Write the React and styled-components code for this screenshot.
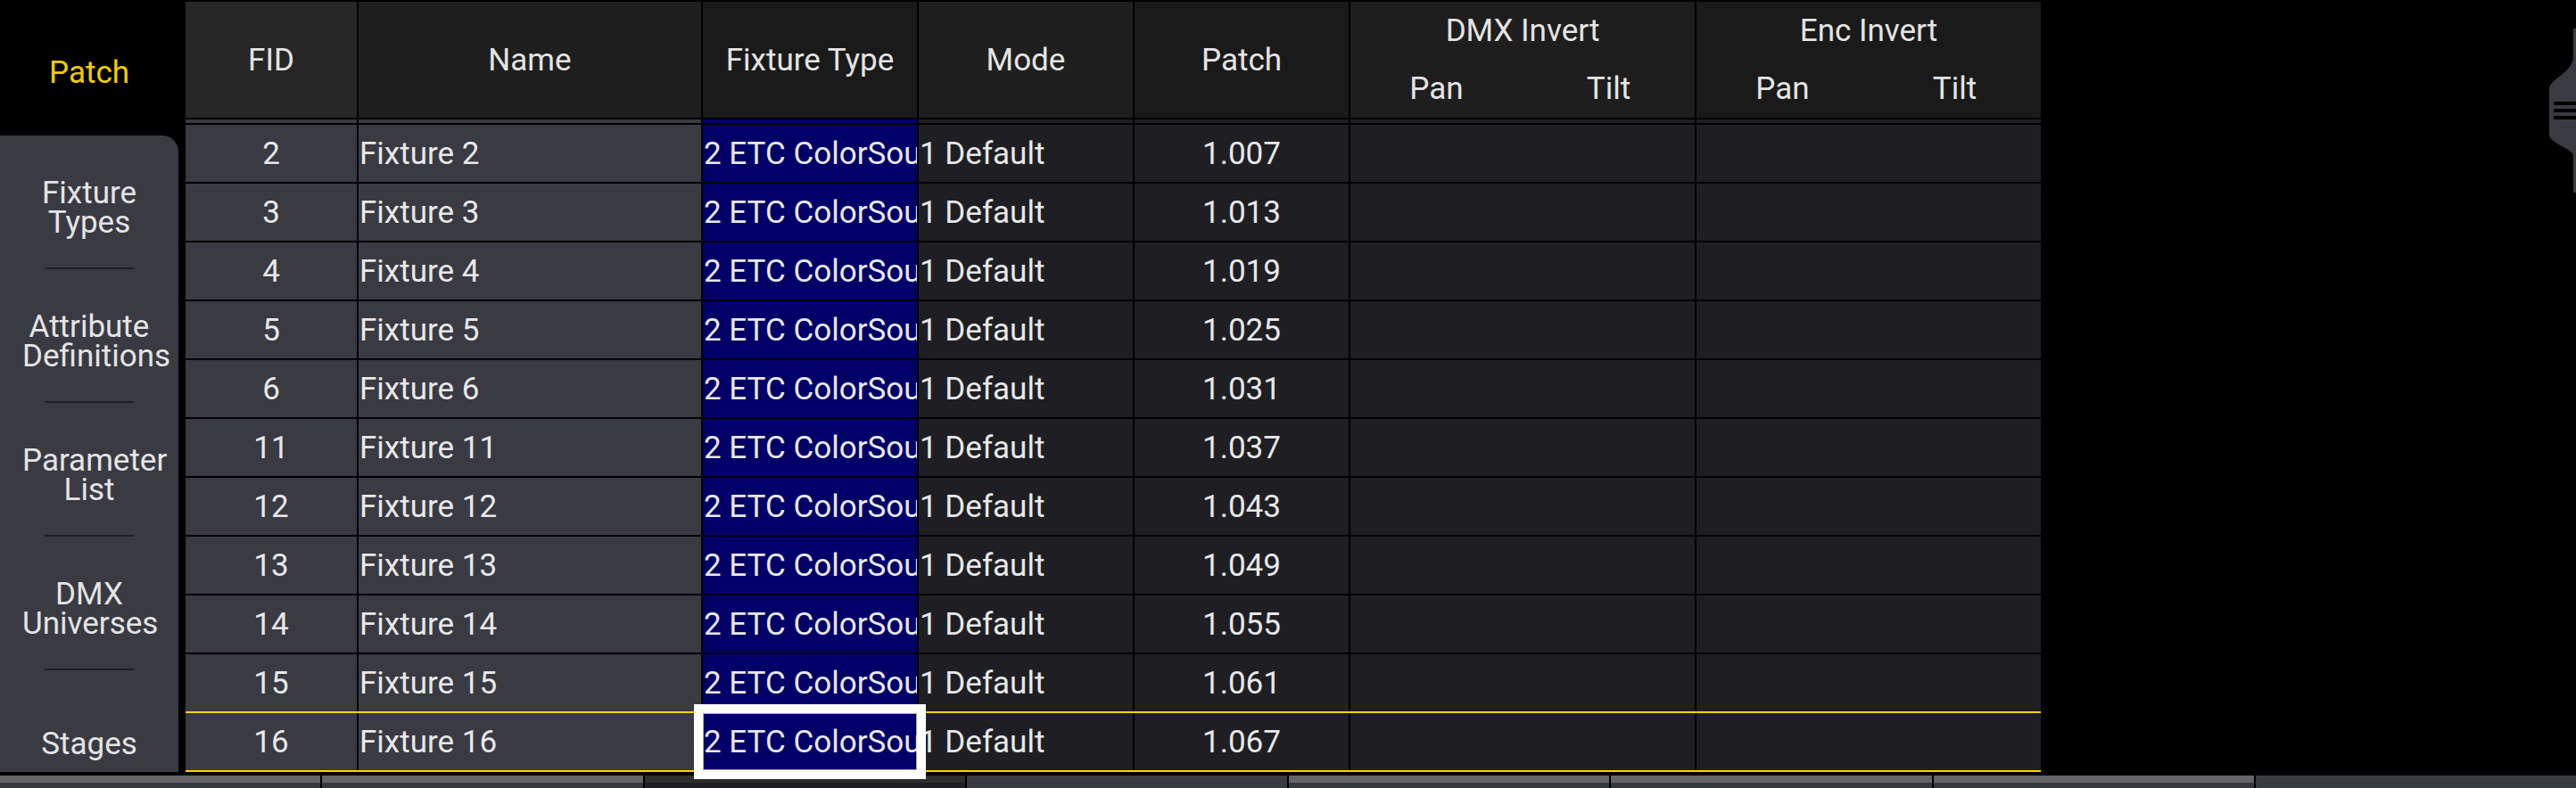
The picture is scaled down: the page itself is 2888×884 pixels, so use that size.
import React from 'react';
import styled, { createGlobalStyle } from 'styled-components';

const GlobalStyle = createGlobalStyle`
  html, body { margin: 0; padding: 0; background: #000; }
  body { font-family: Roboto, "Noto Sans", sans-serif; }
  #root { width: 2888px; height: 884px; overflow: hidden; }
`;

const COLS = '192px 384px 240px 240px 240px 386px 386px';
const LIGHT = '#393a42';
const DARK = '#1f1f23';
const NAVY = '#010068';
const YELLOW = '#ffd200';

const Page = styled.div`
  position: relative;
  width: 2888px;
  height: 884px;
  background: #000;
  display: flex;
  flex-direction: column;
  overflow: hidden;
  font-family: Roboto, "Noto Sans", sans-serif;
  color: #e6e6e6;
`;

const Main = styled.div`
  display: flex;
  gap: 8px;
  height: 866px;
  flex-shrink: 0;
`;

const Sidebar = styled.nav`
  width: 200px;
  display: flex;
  flex-direction: column;
  flex-shrink: 0;
`;

const SidebarTitle = styled.div`
  height: 152px;
  flex-shrink: 0;
  box-sizing: border-box;
  padding-top: 10px;
  display: flex;
  align-items: center;
  justify-content: center;
  color: #f0cc00;
  font-size: 35px;
`;

const TabPanel = styled.div`
  flex: 1;
  min-height: 0;
  background: ${LIGHT};
  border-top-right-radius: 18px;
  overflow: hidden;
  display: flex;
  flex-direction: column;
`;

const TabItem = styled.div`
  flex: 0 0 ${p => p.$h}px;
  box-sizing: border-box;
  padding: 14px 25px 0;
  display: flex;
  align-items: center;
  font-size: 35px;
  line-height: 33px;
  color: #e4e4e4;
`;

const TabLabel = styled.div`
  width: 150px;
  text-align: center;
  white-space: nowrap;
`;

const TabLine = styled.div`
  display: block;
`;

const Separator = styled.div`
  flex: 0 0 2px;
  width: 100px;
  margin: 0 auto;
  background: #1f1f23;
`;

const Table = styled.div`
  width: 2080px;
  flex-shrink: 0;
  padding-top: 2px;
  display: flex;
  flex-direction: column;
  gap: 2px;
  background: #000;
  align-self: flex-start;
`;

const HeaderRow = styled.div`
  display: grid;
  grid-template-columns: ${COLS};
  column-gap: 2px;
  height: 130px;
`;

const HeaderCell = styled.div`
  background: ${p => p.$bg};
  display: flex;
  align-items: center;
  justify-content: center;
  font-size: 35px;
  color: #e4e4e4;
`;

const GroupHeader = styled.div`
  background: ${p => p.$bg};
  display: grid;
  grid-template-columns: 1fr 1fr;
  grid-template-rows: 1fr 1fr;
  font-size: 35px;
  color: #e4e4e4;
`;

const GroupTitle = styled.div`
  grid-column: 1 / -1;
  display: flex;
  align-items: center;
  justify-content: center;
`;

const SubTitle = styled.div`
  display: flex;
  align-items: center;
  justify-content: center;
`;

const StripRow = styled.div`
  display: grid;
  grid-template-columns: ${COLS};
  column-gap: 2px;
  height: 4px;
`;

const Strip = styled.div`
  background: ${p => p.$bg};
`;

const Row = styled.div`
  display: grid;
  grid-template-columns: ${COLS};
  column-gap: 2px;
  height: 64px;
  ${p => p.$selected && `
    position: relative;
    z-index: 1;
    box-shadow: 0 -2px 0 ${YELLOW}, 0 2px 0 ${YELLOW};
  `}
`;

const Cell = styled.div`
  background: ${p => p.$bg};
  min-width: 0;
  display: flex;
  align-items: center;
  justify-content: ${p => (p.$center ? 'center' : 'flex-start')};
  padding-left: ${p => (p.$center ? 0 : 1)}px;
  font-size: 35px;
  white-space: nowrap;
  overflow: hidden;
  color: #e8e8e8;
  ${p => p.$focus && `
    position: relative;
    z-index: 2;
    outline: 10px solid #fff;
    box-shadow: inset 0 0 0 1px #b8a97e;
  `}
`;

const BottomBar = styled.div`
  margin-top: 4px;
  height: 14px;
  flex-shrink: 0;
  display: grid;
  grid-template-columns: repeat(8, 1fr);
  column-gap: 2px;
`;

const SEG = {
  light: 'linear-gradient(#656569 0 8px, #36373f 8px 100%)',
  dark: 'linear-gradient(#2d2d2d 0 8px, #1f1f22 8px 100%)',
  flat: LIGHT,
};

const BarSegment = styled.div`
  background: ${p => SEG[p.$variant]};
`;

const Handle = styled.svg`
  position: absolute;
  top: 30px;
  right: 0;
  width: 32px;
  height: 190px;
`;

const tabs = [
  ['Fixture', 'Types'],
  ['Attribute', 'Definitions'],
  ['Parameter', 'List'],
  ['DMX', 'Universes'],
  ['Stages'],
];

const fids = [2, 3, 4, 5, 6, 11, 12, 13, 14, 15, 16];
const patches = ['1.007', '1.013', '1.019', '1.025', '1.031', '1.037', '1.043', '1.049', '1.055', '1.061', '1.067'];

const stripColors = [LIGHT, LIGHT, NAVY, DARK, DARK, DARK, DARK];
const segments = ['light', 'light', 'dark', 'flat', 'light', 'light', 'light', 'flat'];

export default function App() {
  return (
    <Page>
      <GlobalStyle />
      <Main>
        <Sidebar>
          <SidebarTitle>Patch</SidebarTitle>
          <TabPanel>
            {tabs.map((t, i) => (
              <React.Fragment key={i}>
                <TabItem $h={i === tabs.length - 1 ? 150 : 148}>
                  <TabLabel>
                    {t.map((line, j) => (
                      <TabLine key={j}>{line}</TabLine>
                    ))}
                  </TabLabel>
                </TabItem>
                {i < tabs.length - 1 && <Separator />}
              </React.Fragment>
            ))}
          </TabPanel>
        </Sidebar>
        <Table>
          <HeaderRow>
            <HeaderCell $bg="#272727">FID</HeaderCell>
            <HeaderCell $bg="#1f1f1f">Name</HeaderCell>
            <HeaderCell $bg="#1a1a1a">Fixture Type</HeaderCell>
            <HeaderCell $bg="#1f1f1f">Mode</HeaderCell>
            <HeaderCell $bg="#1a1a1a">Patch</HeaderCell>
            <GroupHeader $bg="#1e1e1e">
              <GroupTitle>DMX Invert</GroupTitle>
              <SubTitle>Pan</SubTitle>
              <SubTitle>Tilt</SubTitle>
            </GroupHeader>
            <GroupHeader $bg="#1a1a1a">
              <GroupTitle>Enc Invert</GroupTitle>
              <SubTitle>Pan</SubTitle>
              <SubTitle>Tilt</SubTitle>
            </GroupHeader>
          </HeaderRow>
          <StripRow>
            {stripColors.map((c, i) => (
              <Strip key={i} $bg={c} />
            ))}
          </StripRow>
          {fids.map((fid, i) => {
            const last = i === fids.length - 1;
            return (
              <Row key={fid} $selected={last}>
                <Cell $bg={LIGHT} $center>{fid}</Cell>
                <Cell $bg={LIGHT}>Fixture {fid}</Cell>
                <Cell $bg={NAVY} $focus={last}>2 ETC ColorSource Spot</Cell>
                <Cell $bg={DARK}>1 Default</Cell>
                <Cell $bg={DARK} $center>{patches[i]}</Cell>
                <Cell $bg={DARK} />
                <Cell $bg={DARK} />
              </Row>
            );
          })}
        </Table>
      </Main>
      <BottomBar>
        {segments.map((s, i) => (
          <BarSegment key={i} $variant={s} />
        ))}
      </BottomBar>
      <Handle viewBox="0 0 32 190">
        <path
          d="M29 2 H32 V186 H29 V145 C29 136 2 132 2 120 V70 C2 58 29 52 29 33 Z"
          fill="#3a3b42"
        />
        <rect x="7" y="84" width="25" height="4" rx="1" fill="#000" />
        <rect x="7" y="92" width="25" height="4" rx="1" fill="#000" />
        <rect x="7" y="100" width="25" height="4" rx="1" fill="#000" />
      </Handle>
    </Page>
  );
}
